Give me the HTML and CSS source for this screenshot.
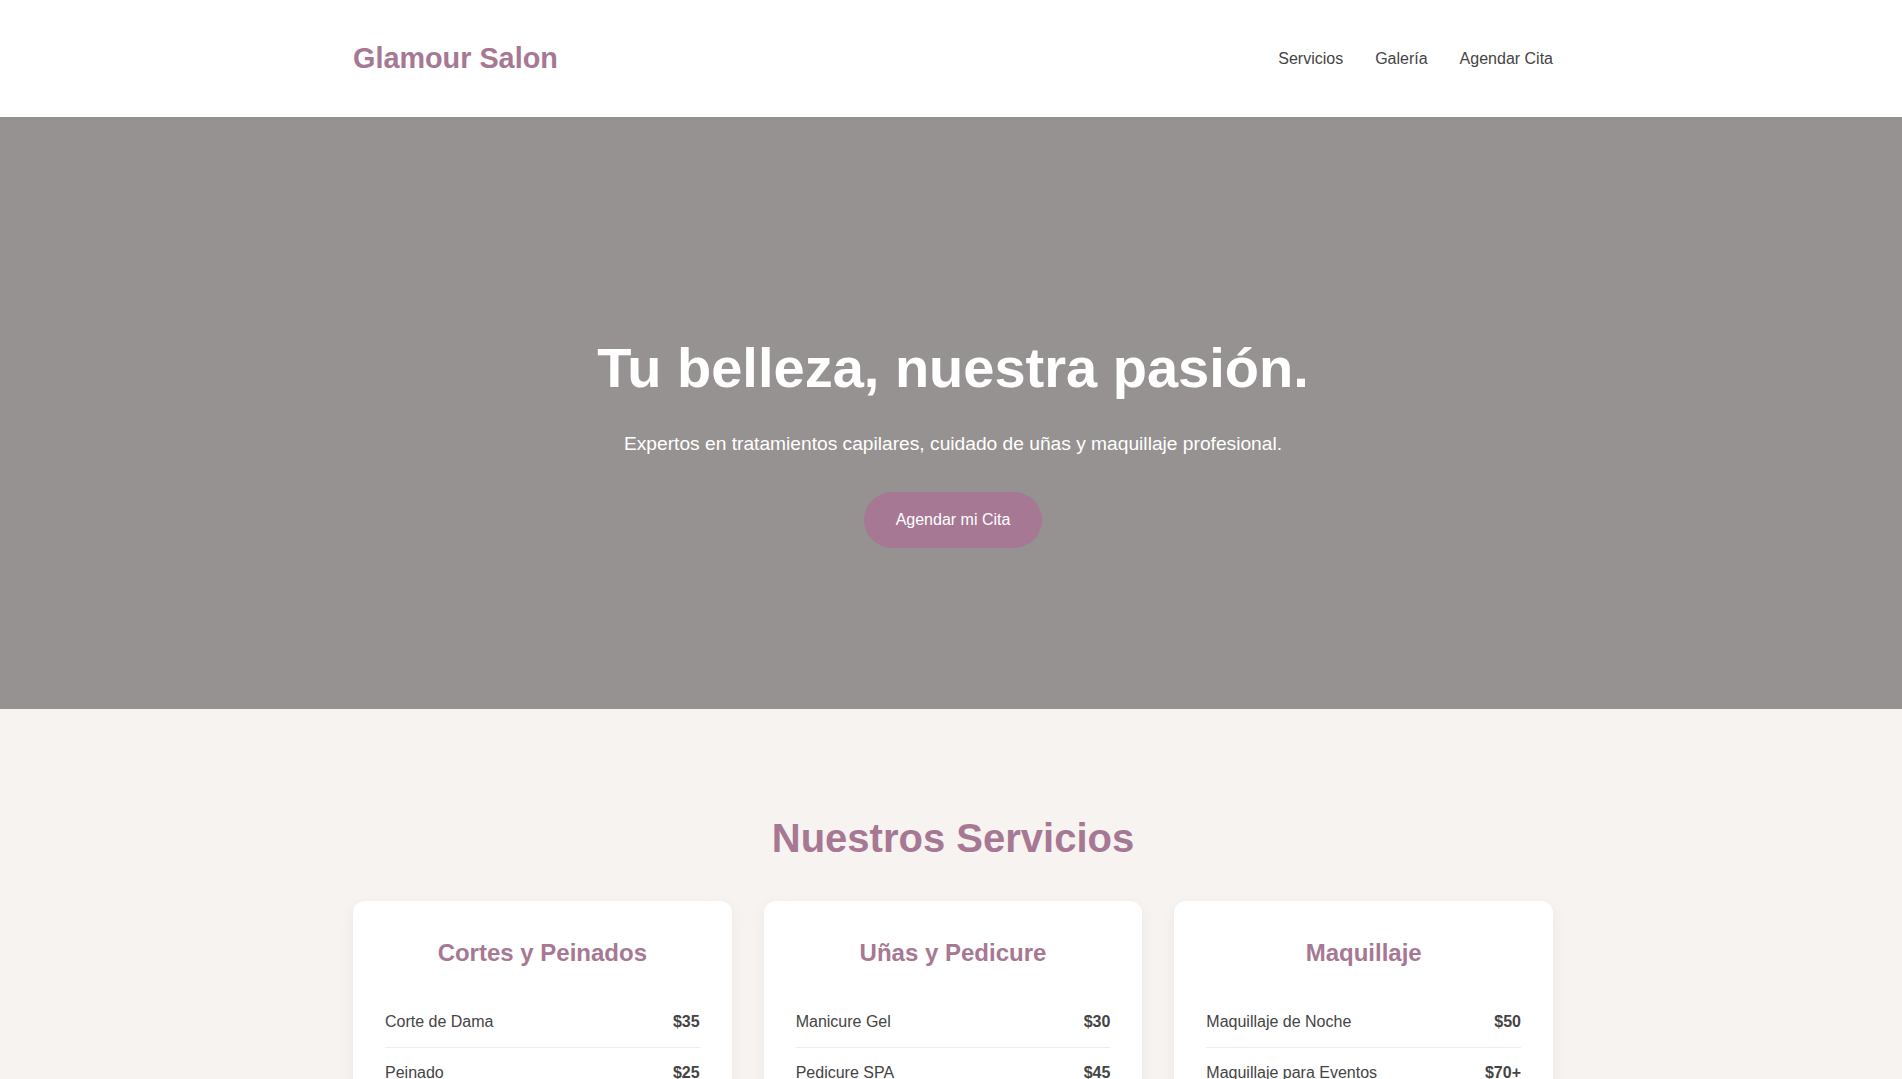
FILE: index.html
```html
<!DOCTYPE html>
<html lang="es">
<head>
<meta charset="utf-8">
<title>Glamour Salon</title>
<link rel="stylesheet" href="styles.css">
</head>
<body>
<header class="site-header">
  <div class="container header-inner">
    <a class="logo" href="#">Glamour Salon</a>
    <nav class="nav">
      <a href="#servicios">Servicios</a>
      <a href="#galeria">Galería</a>
      <a href="#cita">Agendar Cita</a>
    </nav>
  </div>
</header>

<section class="hero">
  <h1 class="hero-title">Tu belleza, nuestra pasión.</h1>
  <p class="hero-sub">Expertos en tratamientos capilares, cuidado de uñas y maquillaje profesional.</p>
  <a class="btn" href="#cita">Agendar mi Cita</a>
</section>

<section class="services" id="servicios">
  <div class="container">
    <h2 class="section-title">Nuestros Servicios</h2>
    <div class="cards">
      <div class="card">
        <h3 class="card-title">Cortes y Peinados</h3>
        <ul class="items">
          <li><span>Corte de Dama</span><strong>$35</strong></li>
          <li><span>Peinado</span><strong>$25</strong></li>
          <li><span>Tinte Completo</span><strong>$60</strong></li>
        </ul>
      </div>
      <div class="card">
        <h3 class="card-title">Uñas y Pedicure</h3>
        <ul class="items">
          <li><span>Manicure Gel</span><strong>$30</strong></li>
          <li><span>Pedicure SPA</span><strong>$45</strong></li>
          <li><span>Uñas Acrílicas</span><strong>$50</strong></li>
        </ul>
      </div>
      <div class="card">
        <h3 class="card-title">Maquillaje</h3>
        <ul class="items">
          <li><span>Maquillaje de Noche</span><strong>$50</strong></li>
          <li><span>Maquillaje para Eventos</span><strong>$70+</strong></li>
          <li><span>Maquillaje de Novia</span><strong>$120</strong></li>
        </ul>
      </div>
    </div>
  </div>
</section>
</body>
</html>
```

FILE: styles.css
```css
* { box-sizing: border-box; }

body {
  margin: 0;
  font-family: "Liberation Sans", Arial, sans-serif;
  color: #444;
  background: #f7f3f0;
}

.container {
  width: 1200px;
  margin: 0 auto;
  position: relative;
  left: 2px;
}

.site-header {
  background: #ffffff;
  padding: 42px 0;
}

.header-inner {
  display: flex;
  align-items: center;
  justify-content: space-between;
}

.logo {
  font-size: 28.8px;
  font-weight: 700;
  color: #a67893;
  text-decoration: none;
}

.nav {
  display: flex;
  gap: 32px;
}

.nav a {
  font-size: 16px;
  color: #444;
  text-decoration: none;
}

.hero {
  background: #969291;
  height: 592px;
  padding: 218px 0 0 4px;
  text-align: center;
  color: #fff;
}

.hero-title {
  margin: 0 0 33px;
  font-size: 56px;
  font-weight: 700;
}

.hero-sub {
  margin: 0 0 37px;
  font-size: 19.2px;
}

.btn {
  display: inline-block;
  background: #a67893;
  color: #fff;
  text-decoration: none;
  font-size: 16px;
  padding: 19.2px 32px;
  border-radius: 50px;
}

.services {
  padding: 107px 0 80px;
}

.section-title {
  margin: 0 0 40px;
  text-align: center;
  font-size: 40px;
  font-weight: 700;
  color: #a67893;
}

.cards {
  display: grid;
  grid-template-columns: repeat(3, 1fr);
  gap: 32px;
}

.card {
  background: #fff;
  border-radius: 12px;
  padding: 38px 32px 32px;
  box-shadow: 0 4px 15px rgba(0, 0, 0, 0.05);
}

.card-title {
  margin: 0 0 30px;
  text-align: center;
  font-size: 24px;
  font-weight: 700;
  color: #a67893;
}

.items {
  list-style: none;
  margin: 0;
  padding: 0;
}

.items li {
  display: flex;
  justify-content: space-between;
  padding: 16px 0;
  border-bottom: 1px solid #eee;
  font-size: 16px;
  color: #444;
}

.items li strong {
  color: #444;
}
```
